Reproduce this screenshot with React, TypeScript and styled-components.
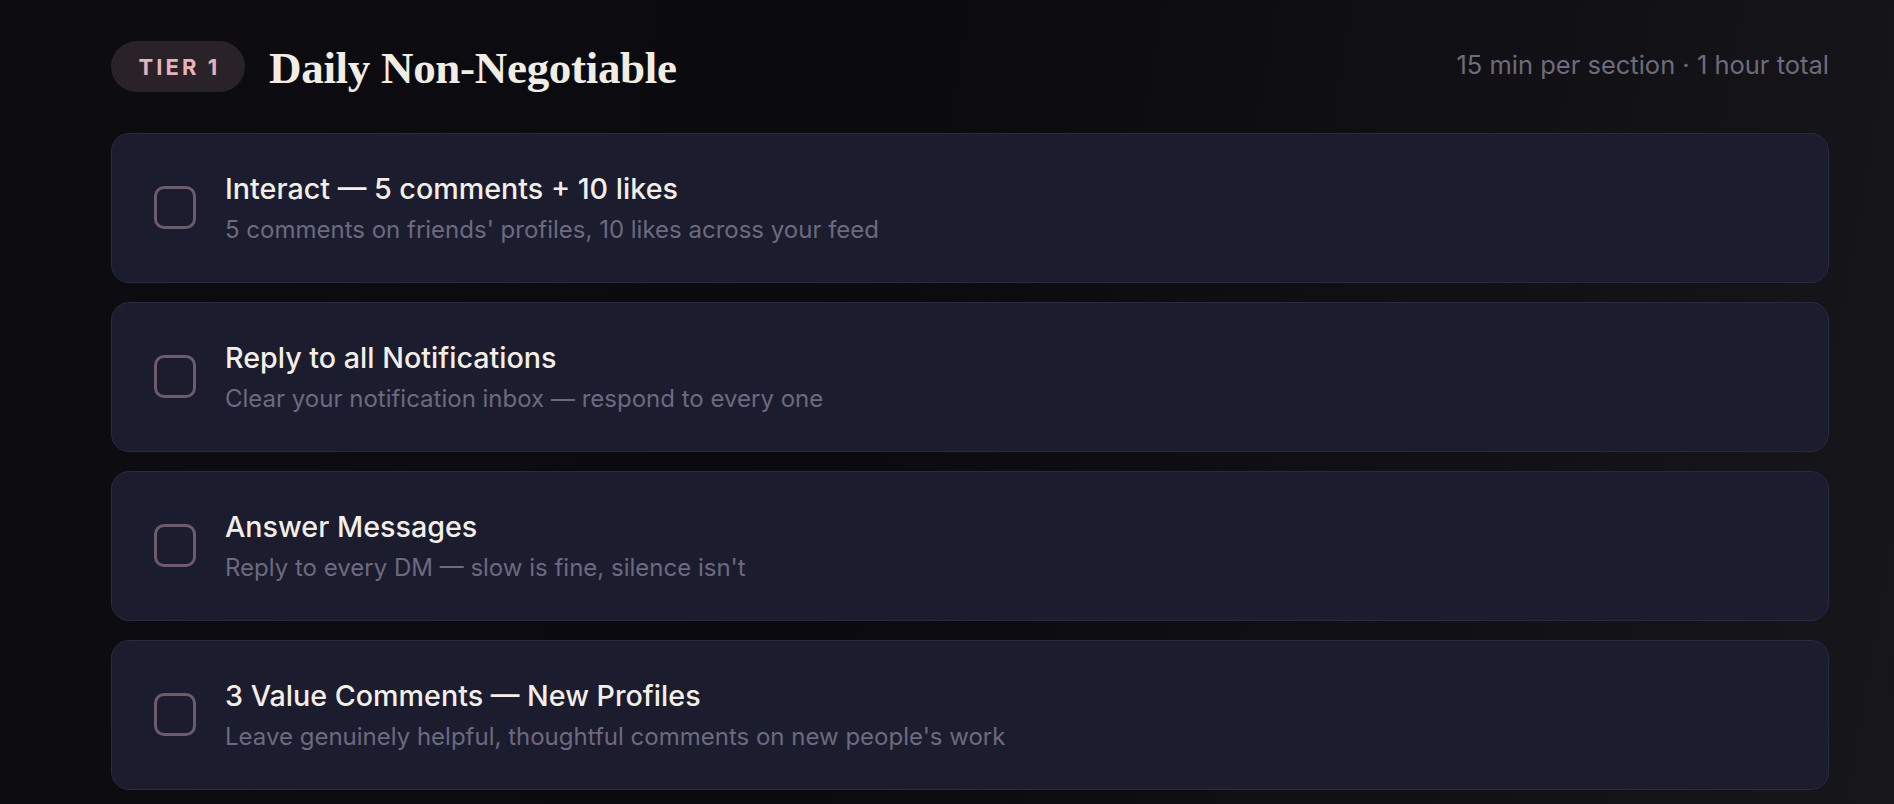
import { FC } from "react";
import styled, { createGlobalStyle } from "styled-components";

const GlobalStyle = createGlobalStyle`
  html, body {
    margin: 0;
    padding: 0;
    background: #0b0b10;
  }
  body {
    font-family: "Inter", "Noto Sans", sans-serif;
  }
`;

// Full-page backdrop with the faint warm glow on the right
const Page = styled.div`
  width: 1894px;
  height: 804px;
  overflow: hidden;
  box-sizing: border-box;
  padding: 41px 65px 0 111px;
  background: linear-gradient(100deg, #0c0c11 0%, #0b0b0f 45%, #121116 80%, #17161a 100%);
`;

const Header = styled.div`
  display: flex;
  align-items: center;
  height: 51px;
  margin-bottom: 41px;
`;

const Badge = styled.span`
  display: inline-flex;
  align-items: center;
  justify-content: center;
  width: 134px;
  height: 51px;
  border-radius: 26px;
  background: #2a2229;
  color: #e8b2ba;
  font-size: 22px;
  font-weight: 700;
  letter-spacing: 0.14em;
  box-sizing: border-box;
  padding-left: 3px;
`;

const Title = styled.h1`
  margin: 0 0 0 24px;
  font-family: "Liberation Serif", "DejaVu Serif", serif;
  font-weight: 700;
  font-size: 45px;
  color: #f1ede4;
  letter-spacing: -0.3px;
  line-height: 1;
  padding-top: 4px;
`;

const Meta = styled.span`
  margin-left: auto;
  font-size: 25.5px;
  color: #6e6b7b;
  padding-bottom: 4px;
`;

const List = styled.div`
  display: flex;
  flex-direction: column;
  gap: 19px;
`;

const Card = styled.div`
  display: flex;
  align-items: center;
  height: 150px;
  box-sizing: border-box;
  padding: 0 42px;
  background: #1b1c2e;
  border: 1px solid #282a40;
  border-radius: 18px;
`;

const Checkbox = styled.span`
  flex: none;
  width: 42px;
  height: 43px;
  box-sizing: border-box;
  border: 3px solid #6d5a6b;
  border-radius: 10px;
  margin-top: -2px;
`;

const Text = styled.div`
  display: flex;
  flex-direction: column;
  margin-left: 29px;
`;

const TaskTitle = styled.div`
  font-size: 28.7px;
  font-weight: 500;
  color: #f3efe7;
  line-height: 34px;
  letter-spacing: 0;
`;

const TaskNote = styled.div`
  font-size: 24px;
  color: #6c6a7f;
  line-height: 30px;
  margin-top: 9px;
`;

const tasks = [
  {
    title: "Interact — 5 comments + 10 likes",
    note: "5 comments on friends' profiles, 10 likes across your feed",
  },
  {
    title: "Reply to all Notifications",
    note: "Clear your notification inbox — respond to every one",
  },
  {
    title: "Answer Messages",
    note: "Reply to every DM — slow is fine, silence isn't",
  },
  {
    title: "3 Value Comments — New Profiles",
    note: "Leave genuinely helpful, thoughtful comments on new people's work",
  },
];

const App: FC = () => {
  return (
    <>
      <GlobalStyle />
      <Page>
        <Header>
          <Badge>TIER 1</Badge>
          <Title>Daily Non-Negotiable</Title>
          <Meta>15 min per section · 1 hour total</Meta>
        </Header>
        <List>
          {tasks.map((t) => (
            <Card key={t.title}>
              <Checkbox />
              <Text>
                <TaskTitle>{t.title}</TaskTitle>
                <TaskNote>{t.note}</TaskNote>
              </Text>
            </Card>
          ))}
        </List>
      </Page>
    </>
  );
};

export default App;
